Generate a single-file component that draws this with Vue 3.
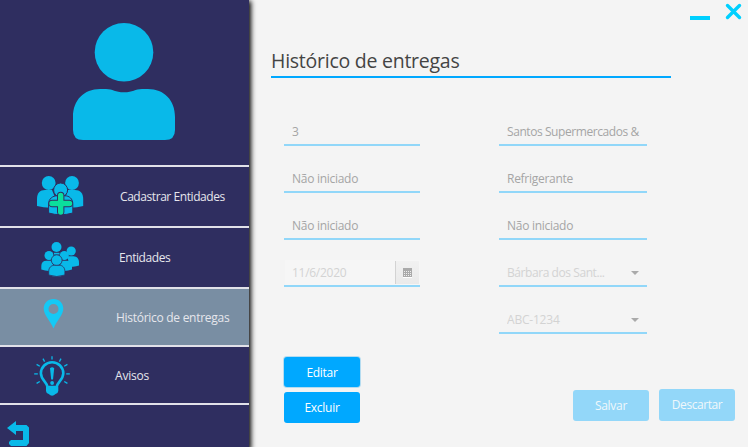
<script setup>
const leftFields = ['3', 'Não iniciado', 'Não iniciado']
const rightFields = ['Santos Supermercados &', 'Refrigerante', 'Não iniciado']
const combos = ['Bárbara dos Sant...', 'ABC-1234']
const rays = [
  'M52 356.2V359.6', 'M43 358.6L44.6 361.6', 'M61 358.6L59.4 361.6',
  'M36.6 364.4L39.8 366.3', 'M67.4 364.4L64.2 366.3',
  'M34.2 373.9H37.8', 'M66.2 373.9H69.8',
  'M36.6 383.4L39.8 381.5', 'M67.4 383.4L64.2 381.5'
]
</script>

<template>
  <div class="window">
    <aside class="sidebar">
      <div class="profile">
        <svg width="249" height="165" viewBox="0 0 249 165" fill="#09b9e9">
          <circle cx="124" cy="52.2" r="29.3" />
          <path d="M73 117C73 100 84 89 100 89H106C113 89 115 92.3 124 92.3S135 89 142 89H148C164 89 175 100 175 117V130Q175 140 165 140H83Q73 140 73 130Z" />
        </svg>
      </div>

      <nav>
        <a class="item tall">
          <svg width="120" height="59" viewBox="0 167 120 59" fill="#09b9e9">
            <circle cx="48.7" cy="183" r="6.9" />
            <circle cx="72" cy="183" r="6.9" />
            <path d="M37 206V199C37 193 40 190 45 190H52L59 207Q48 209 37 206Z" />
            <path d="M83.2 206V199C83.2 193 80 190 75 190H68L62 207Q73 209 83.2 206Z" />
            <circle cx="60.6" cy="190" r="7" stroke="#2f2e60" stroke-width="1" />
            <path d="M48.6 213V204C48.6 198.5 53 195.8 57 195.8H65C69 195.8 72.8 198.5 72.8 204V213Q60.6 216.5 48.6 213Z" stroke="#2f2e60" stroke-width="1" />
            <path d="M60.7 195.5V211.7M52.3 203.5H69.3" stroke="#2f2e60" stroke-width="7.4" stroke-linecap="round" />
            <path d="M60.7 195.5V212M52 203.5H69.5" stroke="#0bdf9c" stroke-width="5.4" stroke-linecap="round" />
          </svg>
          <span class="tight">Cadastrar Entidades</span>
        </a>
        <a class="item tall">
          <svg width="119" height="59" viewBox="0 228 119 59" fill="#09b9e9">
            <circle cx="56.5" cy="247" r="5" />
            <path d="M54 252.8H59.5V254.6H54Z" />
            <circle cx="71.2" cy="251" r="4.6" />
            <path d="M67 256.2H73.5C77 256.2 79 259 79 262.5V265.6Q75 267.2 70 266.5Z" />
            <circle cx="49" cy="255.5" r="4.5" />
            <circle cx="64.3" cy="255.5" r="4.5" />
            <path d="M41.3 269.5V266C41.3 262.6 43.3 260.8 46.5 260.8H51.5L55 270Q48 272 41.3 269.5Z" />
            <path d="M72 269.5V266C72 262.6 70 260.8 67 260.8H62L58 270Q65 272 72 269.5Z" />
            <circle cx="56.7" cy="260.2" r="5.4" stroke="#2f2e60" stroke-width=".8" />
            <path d="M48.7 275V271.5C48.7 267.5 51.3 265.3 54.5 265.3H59.5C62.5 265.3 64.9 267.5 64.9 271.5V275Q56.7 278 48.7 275Z" stroke="#2f2e60" stroke-width=".8" />
          </svg>
          <span class="tight">Entidades</span>
        </a>
        <a class="item active">
          <svg width="116" height="56" viewBox="0 289 116 56" fill="#14c9f5">
            <path fill-rule="evenodd" d="M53.5 299C47.8 299 43.7 303.2 43.7 308.6C43.7 315 50 320.5 53.5 328.5C57 320.5 63.3 315 63.3 308.6C63.3 303.2 59.2 299 53.5 299ZM53.5 304A5 5 0 1 1 53.5 314A5 5 0 1 1 53.5 304Z" />
          </svg>
          <span>Histórico de entregas</span>
        </a>
        <a class="item">
          <svg width="115" height="56" viewBox="0 347 115 56" fill="none" stroke="#09b9e9">
            <path v-for="ray in rays" :key="ray" :d="ray" stroke-width="1.3" />
            <path d="M47.5 387C47 382 40.9 380 40.9 373.3A11.2 11 0 0 1 63.3 373.3C63.3 380 57.2 382 56.7 387Z" stroke-width="2.6" />
            <path d="M46 387H58.3V391Q58 393.5 55.5 394Q52 397.5 48.7 394Q46.2 393.5 46 391Z" fill="#09b9e9" stroke="none" />
            <path d="M50 368.2Q52.1 366.5 54.2 368.2L53 379.5H51.2Z" fill="#09b9e9" stroke="none" />
            <circle cx="52.1" cy="383" r="1.9" fill="#09b9e9" stroke="none" />
          </svg>
          <span class="loose">Avisos</span>
        </a>
      </nav>

      <div class="back">
        <svg width="40" height="42" viewBox="0 405 40 42" fill="#09b9e9">
          <path d="M7 428L16 421V425H26.5L29 427.5V443L26.5 446H11L9 444V442L11 440H23V431H16V435Z" />
        </svg>
      </div>
    </aside>

    <main class="content">
      <div class="controls">
        <svg width="58" height="24" viewBox="690 0 58 24" stroke="#00d0ff" fill="none">
          <path d="M690 18H710" stroke-width="4" />
          <path d="M727.5 5.5L739.5 17.5M739.5 5.5L727.5 17.5" stroke-width="3.4" stroke-linecap="round" />
        </svg>
      </div>

      <h1>Histórico de entregas</h1>

      <div class="form">
        <div class="column">
          <div v-for="(value, i) in leftFields" :key="i" class="field">
            <span class="value">{{ value }}</span>
          </div>
          <div class="field date">
            <span class="value">11/6/2020</span>
            <span class="picker">
              <svg width="9" height="10" viewBox="0 0 9 10" shape-rendering="crispEdges">
                <path d="M0 0H9V9H0Z" fill="#aaa" />
                <path d="M1 3H8M1 5H8M1 7H8" stroke="#eee" stroke-dasharray="1 1" transform="translate(0 .5)" />
                <path d="M0 9H9V10H0Z" fill="#fff" />
              </svg>
            </span>
          </div>
        </div>
        <div class="column wide">
          <div v-for="(value, i) in rightFields" :key="i" class="field">
            <span class="value" :class="{ tight: value.length > 12 }">{{ value }}</span>
          </div>
          <div v-for="value in combos" :key="value" class="field combo">
            <span class="value" :class="value.length > 12 ? 'tight' : 'loose'">{{ value }}</span>
            <svg width="8" height="4" viewBox="0 0 8 4"><path d="M0 0H8L4 4Z" fill="#aaa" /></svg>
          </div>
        </div>
      </div>

      <div class="actions">
        <div class="stack">
          <button class="focused">Editar</button>
          <button>Excluir</button>
        </div>
        <div class="pair">
          <button disabled>Salvar</button>
          <button disabled class="discard">Descartar</button>
        </div>
      </div>
    </main>
  </div>
</template>

<style>
body {
  margin: 0;
  overflow: hidden;
}
</style>

<style scoped>
.window {
  display: flex;
  width: 748px;
  height: 447px;
  background: #f4f4f4;
  font-family: "Open Sans", "Noto Sans", sans-serif;
  font-size: 12px;
  letter-spacing: -0.28px;
  overflow: hidden;
}
svg {
  display: block;
  flex: none;
}
.sidebar {
  width: 249px;
  flex: none;
  background: #2f2e60;
  box-shadow: 1px 2px 5px 1px #000;
}
.profile {
  height: 165px;
}
.item {
  display: flex;
  box-sizing: border-box;
  height: 58px;
  border-top: 2px solid #e1e1e9;
  color: #e6e6ec;
  white-space: nowrap;
}
.item.tall {
  height: 61px;
}
.item span {
  line-height: 18px;
  padding-top: 20px;
}
.item.tall span {
  padding-top: 21px;
}
.item.active {
  background: #798ea3;
}
.tight {
  letter-spacing: -0.43px;
}
.loose {
  letter-spacing: -0.2px;
}
.back {
  border-top: 2px solid #e1e1e9;
  height: 42px;
}
.content {
  flex: 1;
  min-width: 0;
  display: flex;
  flex-direction: column;
}
.controls {
  display: flex;
  justify-content: flex-end;
  height: 24px;
}
h1 {
  box-sizing: border-box;
  width: 400px;
  height: 54px;
  margin: 0 0 0 22px;
  padding-top: 23px;
  border-bottom: 2px solid #00a8ff;
  color: #444;
  font-size: 19.5px;
  font-weight: 400;
  letter-spacing: -0.25px;
  line-height: 28px;
}
.form {
  display: flex;
  gap: 79px;
  padding: 41px 0 0 35px;
}
.column {
  width: 136px;
  display: flex;
  flex-direction: column;
  gap: 20px;
}
.column.wide {
  width: 148px;
}
.field {
  display: flex;
  align-items: center;
  box-sizing: border-box;
  height: 27px;
  padding: 0 6px 0 8px;
  border-bottom: 2px solid #91d7f9;
  color: #a5a5a5;
}
.value {
  flex: 1;
  overflow: hidden;
  white-space: nowrap;
  line-height: 18px;
}
.date {
  color: #d3d3d3;
  padding-right: 1px;
  background: linear-gradient(to right, #f4f4f4 1px, #f6f6f6 1px);
}
.picker {
  box-sizing: border-box;
  width: 24px;
  height: 23px;
  margin-top: -1px;
  border-left: 1px solid #d3d3d3;
  background: linear-gradient(#f1f1f1, #eaeaea);
  display: flex;
  align-items: center;
  justify-content: center;
}
.picker svg {
  margin-top: 1px;
}
.combo {
  color: #d3d3d3;
  padding-right: 8px;
}
.actions {
  display: flex;
  justify-content: space-between;
  padding: 23px 13px 0 35px;
}
.stack {
  display: flex;
  flex-direction: column;
  gap: 5px;
}
.pair {
  display: flex;
  align-items: flex-end;
  gap: 10px;
  height: 64px;
}
button {
  width: 76px;
  height: 31px;
  padding: 0;
  border: 0;
  border-radius: 3px;
  background: #00a8ff;
  color: #fff;
  font: inherit;
  letter-spacing: inherit;
}
.focused {
  height: 30px;
  box-shadow: 0 0 0 1px #b5dcf0;
}
button:disabled {
  background: #93d7f9;
  color: #f0f7fb;
}
button.discard {
  height: 32px;
  padding-bottom: 1px;
  letter-spacing: -0.45px;
}
</style>
